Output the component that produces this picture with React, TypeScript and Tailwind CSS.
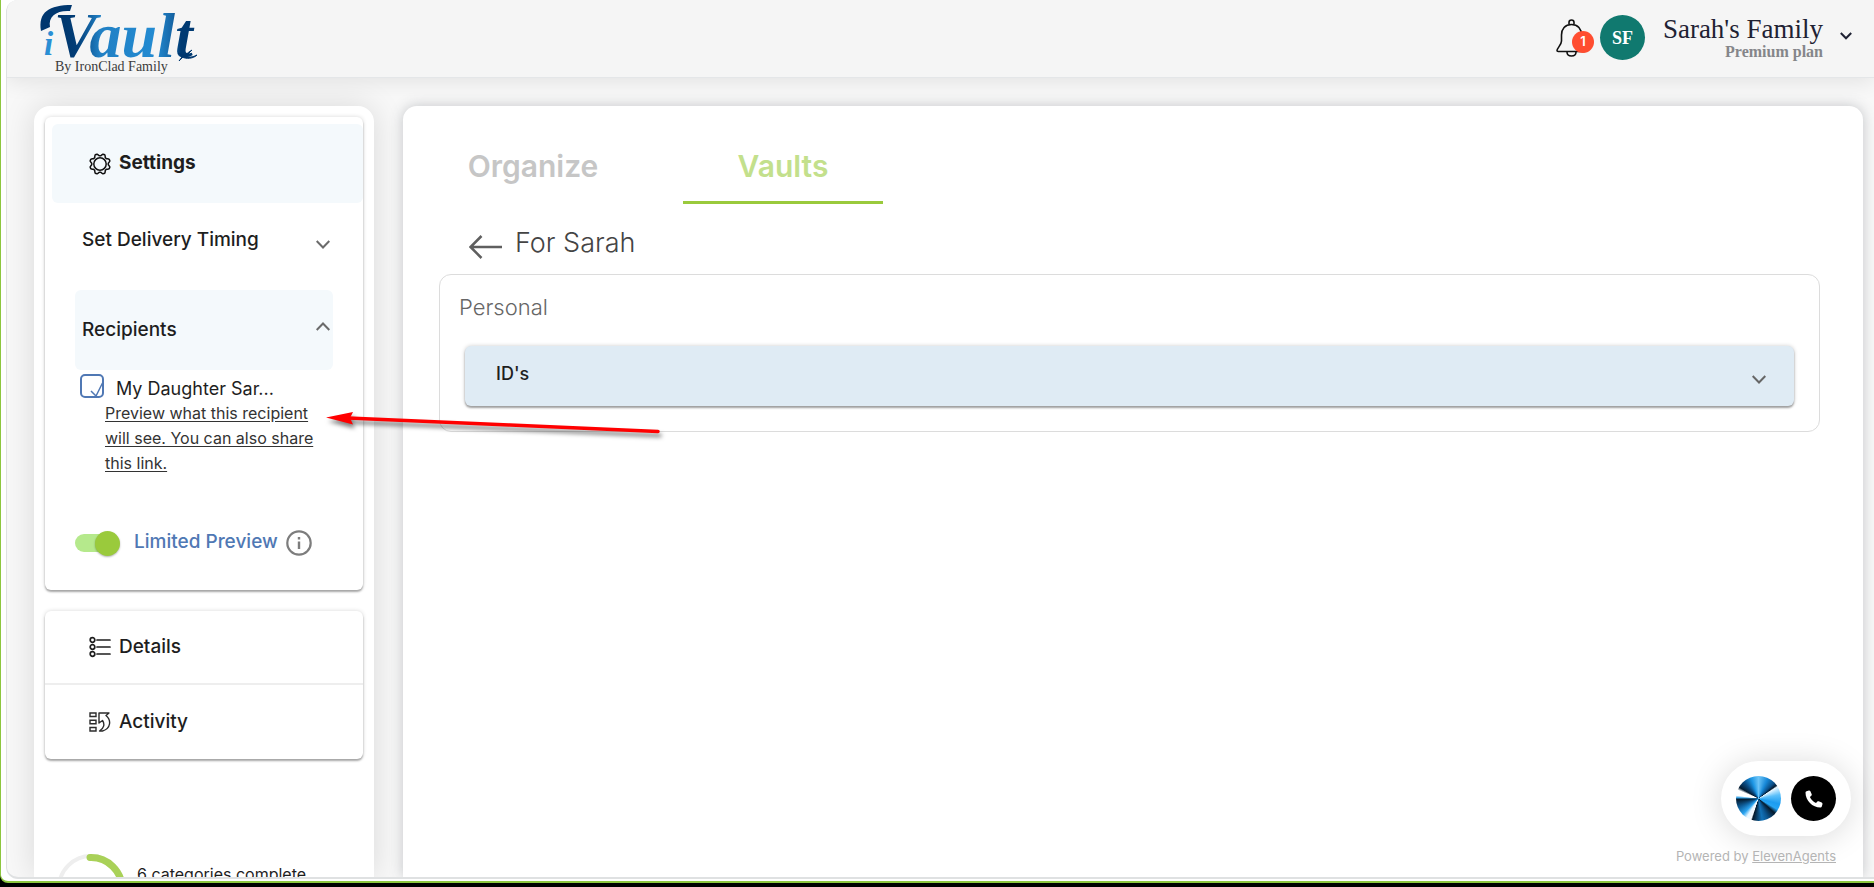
import React, { useState } from "react";

const ink = "#1e1e1e";

function Chevron({ up = false, className = "text-[#6b6b6b]" }: { up?: boolean; className?: string }) {
  return (
    <svg viewBox="0 0 14 9" className={`h-[9px] w-[14px] shrink-0 ${className}`} fill="none" stroke="currentColor" strokeWidth="2" aria-hidden="true">
      <path d={up ? "M.7 8 7 1.5 13.3 8" : "M.7 1 7 7.5 13.3 1"} />
    </svg>
  );
}

function Logo() {
  return (
    <svg viewBox="0 0 170 78" className="h-[78px] w-[170px]" role="img" aria-label="iVault By IronClad Family">
      <defs>
        <linearGradient id="vault" gradientUnits="userSpaceOnUse" x1="20" y1="0" x2="160" y2="0">
          <stop offset="0" stopColor="#003468" />
          <stop offset="0.16" stopColor="#023e78" />
          <stop offset="0.32" stopColor="#2180c4" />
          <stop offset="0.72" stopColor="#238bd2" />
          <stop offset="0.84" stopColor="#1665a5" />
          <stop offset="0.9" stopColor="#003a72" />
        </linearGradient>
      </defs>
      <path d="M6 31C3 12 14 5 37 5L35 11C22 10 13 16 15 27Z" fill="#00376f" />
      <text x="19" y="57" fontSize="64" fontWeight="700" fontStyle="italic" fill="url(#vault)" className="font-['Liberation_Serif',serif]">Vault</text>
      <path d="M143 53C150 58 157 58 162 55C158 59 151 59 147 57L144 61C148 57 152 53 157 50L151 56Z" fill="#00376f" stroke="#00376f" />
      <text x="9" y="55" fontSize="33" fontWeight="700" fontStyle="italic" fill="#2a8fd4" className="font-['Liberation_Serif',serif]">i</text>
      <text x="20" y="71" fontSize="14" fill="#3c3c3c" className="font-['Liberation_Serif',serif]">By IronClad Family</text>
    </svg>
  );
}

function Bell() {
  return (
    <svg viewBox="0 0 32 38" className="h-[38px] w-8" fill="none" stroke="#111" strokeWidth="1.6" aria-hidden="true">
      <path d="M13 5V3.500a2.500 2.500 0 0 1 5 0V5" />
      <path d="M15.500 5.500C9 5.500 5.500 10 5.500 16v6c0 4-4.500 7-4.500 9.500 0 .8.5 1 1.200 1h26.600c.7 0 1.200-.2 1.200-1 0-2.500-4.500-5.500-4.500-9.500v-6c0-6-3.500-10.500-10-10.500Z" />
      <path d="M11 33c0 5.300 9 5.300 9 0" />
    </svg>
  );
}

function GearIcon() {
  const points = Array.from({ length: 64 }, (_, i) => {
    const a = (i / 64) * Math.PI * 2;
    const r = 9.300 + 1.100 * Math.tanh(2 * Math.cos(8 * a + Math.PI));
    return `${(11 + r * Math.cos(a)).toFixed(2)},${(11 + r * Math.sin(a)).toFixed(2)}`;
  }).join(" ");
  return (
    <svg viewBox="0 0 22 22" className="size-[22px]" fill="none" stroke="#111" strokeWidth="1.5" strokeLinejoin="round" aria-hidden="true">
      <polygon points={points} />
      <circle cx="11" cy="11" r="6.200" />
    </svg>
  );
}

function ListIcon() {
  return (
    <svg viewBox="0 0 22 22" className="size-[22px]" fill="none" stroke={ink} strokeWidth="1.7" aria-hidden="true">
      {[4, 11, 18].map((y) => (
        <g key={y}>
          <circle cx="3.500" cy={y} r="2.300" />
          <path d={`M8 ${y}h13`} strokeLinecap="round" />
        </g>
      ))}
    </svg>
  );
}

function ActivityIcon() {
  return (
    <svg viewBox="0 0 22 22" className="size-[22px]" fill="none" stroke="#2c2c2c" strokeWidth="1.400" aria-hidden="true">
      <path d="M1 2h6v3.500H1zM1 9.200h6v3.500H1zM1 16.500h6V20H1z" />
      <path d="M10 2h10l-3 2.500c5.500 4.500 5 13-3.500 15.500h-3c4.500-2.500 5.500-7 3-10.500L10 12Z" strokeLinejoin="round" />
    </svg>
  );
}

function Header() {
  return (
    <header className="relative flex h-[78px] shrink-0 items-start justify-between border-b border-[#e4e6e8] bg-[#f5f5f5] pl-7 pr-[22px] shadow-[0_4px_20px_rgba(0,0,0,0.09)]">
      <a href="#home"><Logo /></a>
      <div className="flex items-start pt-[15px]">
        <button aria-label="Notifications, 1 unread" className="relative mt-1 h-[38px] w-11">
          <Bell />
          <span className="absolute left-4 top-3 flex size-[22px] items-center justify-center rounded-full bg-[#ff4d30] text-[13px] font-semibold text-white">1</span>
        </button>
        <span className="flex size-[45px] items-center justify-center rounded-full bg-[#10796f] font-['Liberation_Serif',serif] text-lg font-bold text-white">SF</span>
        <button className="ml-[18px] flex items-center gap-[17px] font-['Liberation_Serif',serif]">
          <span className="flex flex-col items-end">
            <span className="text-[27px] leading-7 text-[#1f2233]">Sarah's Family</span>
            <span className="text-base font-bold leading-[18px] text-[#85868a]">Premium plan</span>
          </span>
          <svg viewBox="0 0 12 8" className="mb-1 h-2 w-3" fill="none" stroke="#1f2233" strokeWidth="2" aria-hidden="true"><path d="M.8 1 6 6.300 11.200 1" /></svg>
        </button>
      </div>
    </header>
  );
}

const panel = "bg-white shadow-[0_2px_2px_rgba(0,0,0,0.3),0_0_4px_rgba(0,0,0,0.16)]";

function Sidebar() {
  const [checked, setChecked] = useState(true);
  const [limited, setLimited] = useState(true);
  return (
    <aside className="w-[340px] shrink-0 rounded-t-2xl bg-white px-[11px] pt-[11px] text-[#1e1e1e] shadow-[0_0_32px_rgba(0,0,0,0.13)]">
      <section className={`${panel} rounded-md pb-[34px] pt-[7px]`}>
        <button className="ml-[7px] flex h-[79px] w-[311px] items-center gap-2 rounded-md bg-[#f4f9fc] pl-[37px] text-[19px] font-bold">
          <GearIcon />
          Settings
        </button>
        <div className="px-[30px]">
          <button className="flex h-[87px] w-full items-start justify-between pl-[7px] pr-[3px] pt-[25px] text-[19px] font-medium leading-6">
            Set Delivery Timing
            <Chevron className="mt-3 text-[#6b6b6b]" />
          </button>
          <button className="flex h-20 w-full items-center justify-between rounded-md bg-[#f4f9fc] pl-[7px] pr-[3px] text-[19px] font-medium">
            Recipients
            <Chevron up className="mb-2 text-[#6b6b6b]" />
          </button>
          <label className="flex h-[31px] items-start gap-3 pl-[5px] pt-1 text-lg leading-[30px]">
            <span className="relative size-6 shrink-0">
              <input type="checkbox" checked={checked} onChange={() => setChecked(!checked)} className="block size-6 appearance-none rounded-[5px] border-2 border-[#5078b4]" />
              {checked && (
                <svg viewBox="0 0 24 24" className="pointer-events-none absolute inset-0 size-6" fill="none" stroke="#5078b4" strokeWidth="1.500" aria-hidden="true"><path d="m11 17 5 5L22.500 9" /></svg>
              )}
            </span>
            My Daughter Sar...
          </label>
          <a href="#preview" className="ml-[30px] block w-[212px] text-base leading-[25px] text-[#333] underline underline-offset-2">
            Preview what this recipient will see. You can also share this link.
          </a>
          <div className="mt-[54px] flex h-[26px] items-center">
            <label className="flex items-center gap-[14px] text-[19px] font-medium text-[#5078b4]">
              <span className="relative flex h-[26px] w-[45px] items-center">
                <input type="checkbox" role="switch" checked={limited} onChange={() => setLimited(!limited)} className="h-[18px] w-10 appearance-none rounded-full bg-[#b5e98c]" />
                <span className={`absolute size-[25px] rounded-full bg-[#9aca3c] shadow-[0_1px_2px_rgba(0,0,0,0.3)] ${limited ? "right-0" : "left-0"}`} />
              </span>
              <span className="pb-0.5">Limited Preview</span>
            </label>
            <button aria-label="About limited preview" className="ml-2">
              <svg viewBox="0 0 26 26" className="size-[26px]" fill="none" stroke="#7d7d7d" aria-hidden="true">
                <circle cx="13" cy="13" r="11.700" strokeWidth="2.200" />
                <path d="M13 11.500V19M13 7v2.400" strokeWidth="2.400" />
              </svg>
            </button>
          </div>
        </div>
      </section>
      <nav className={`${panel} mt-[21px] rounded-md text-[19px] font-medium`}>
        <button className="flex h-[74px] w-full items-center gap-2 border-b-2 border-[#eee] pl-11"><ListIcon />Details</button>
        <button className="flex h-[74px] w-full items-center gap-2 pl-11"><ActivityIcon />Activity</button>
      </nav>
      <div className="mt-[93px] flex items-start gap-2.5 pl-3">
        <svg viewBox="0 0 70 70" className="size-[70px]" fill="none" aria-hidden="true">
          <circle cx="34" cy="36" r="32" stroke="#eee" strokeWidth="4" />
          <path d="M33 5.500A31 31 0 0 1 65 37" stroke="#a9d158" strokeWidth="7" strokeLinecap="round" />
        </svg>
        <p className="pt-2 text-base leading-7">6 categories complete</p>
      </div>
    </aside>
  );
}

function Main() {
  return (
    <main className="min-w-0 flex-1 rounded-t-[14px] bg-white px-9 pt-[26px] shadow-[0_0_14px_rgba(60,70,80,0.28)]">
      <div role="tablist" className="-ml-1.5 flex gap-[50px] text-3xl font-semibold">
        <button role="tab" aria-selected="false" className="h-[72px] w-[200px] border-b-3 border-transparent pb-0.5 text-[#c6c6c6]">Organize</button>
        <button role="tab" aria-selected="true" className="h-[72px] w-[200px] border-b-3 border-[#9aca3c] pb-0.5 text-[#c3e08c]">Vaults</button>
      </div>
      <div className="flex h-[70px] items-center gap-3 pl-[30px] pt-2">
        <button aria-label="Back" className="pt-2">
          <svg viewBox="0 0 34 24" className="h-6 w-[34px]" fill="none" stroke="#5f5f5f" strokeWidth="2.500" aria-hidden="true"><path d="M33 12H2M12.500 1 1.500 12l11 11" /></svg>
        </button>
        <h1 className="text-[27px] font-light leading-8 text-[#444]">For Sarah</h1>
      </div>
      <section className="mr-[7px] rounded-xl border border-[#dcdcdc] px-[25px] pb-[25px] pt-4">
        <h2 className="-ml-1.5 text-[22px] font-light leading-8 text-[#666]">Personal</h2>
        <button className="mt-[23px] flex h-[60px] w-full items-center justify-between rounded-md bg-[#dfebf4] pl-[31px] pr-7 text-lg font-medium text-[#1e1e1e] shadow-[0_2px_2px_rgba(0,0,0,0.32),0_0_4px_rgba(0,0,0,0.2)]">
          <span className="pb-1">ID's</span>
          <Chevron className="mt-1.5 text-[#666]" />
        </button>
      </section>
    </main>
  );
}

function CallWidget() {
  return (
    <div className="absolute bottom-[17px] right-[23px] flex flex-col items-end gap-3">
      <div className="flex h-[75px] items-center gap-2.5 rounded-full bg-white px-[15px] shadow-[0_2px_32px_rgba(0,0,0,0.15)]">
        <span className="size-[45px] rounded-full bg-[conic-gradient(#6cc4f7_0deg,#1788d8_25deg,#0a4d86_45deg,#031a30_54deg,#e8f6ff_58deg,#5cc0fa_80deg,#1c9cf0_105deg,#25a5f5_120deg,#04192b_132deg,#0b5590_155deg,#1272b8_170deg,#04182a_196deg,#f5fbff_200deg,#e8f6ff_212deg,#2ba4f0_225deg,#0f62a0_245deg,#03182b_268deg,#2a9fe8_272deg,#fff_278deg,#fff_292deg,#031a30_300deg,#0a4d86_320deg,#1c96e4_340deg,#6cc4f7_360deg)]" />
        <button aria-label="Start call" className="flex size-[45px] items-center justify-center rounded-full bg-black">
          <svg viewBox="0 0 18 18" className="size-[18px]" fill="#fff" aria-hidden="true"><path d="M3.900.5c.6-.1 1.200.2 1.500.8l1.300 3c.2.6.1 1.100-.4 1.500L4.900 7c1.300 2.700 3.400 4.800 6.100 6.100l1.200-1.400c.4-.5.9-.6 1.500-.4l3 1.300c.6.3.9.9.8 1.500l-.7 2.400c-.2.600-.7 1-1.300 1C7.400 17.500.500 10.600.500 2.500c0-.600.400-1.100 1-1.300Z" /></svg>
        </button>
      </div>
      <p className="mr-[15px] text-[13px] leading-4 text-[#b4b4b4]">Powered by <a href="#elevenagents" className="underline">ElevenAgents</a></p>
    </div>
  );
}

function PointerArrow() {
  return (
    <svg viewBox="0 0 350 40" className="pointer-events-none absolute left-[319px] top-[402px] h-10 w-[350px] drop-shadow-[2px_4px_2px_rgba(0,0,0,0.5)]" aria-hidden="true">
      <path d="M28 16 338 29.500" stroke="#f00" strokeWidth="3.500" strokeLinecap="round" />
      <path d="M6 15.500 33 10l-3 6 3 6.500Z" fill="#f00" />
    </svg>
  );
}

export default function App() {
  return (
    <div className="h-screen bg-black pb-1 font-['Inter',sans-serif]">
      <div className="relative h-full overflow-hidden rounded-bl-lg border-b-2 border-l border-[#8dc63f] bg-white pb-0.5 pl-[5px]">
        <div className="flex h-full flex-col overflow-hidden rounded-l-xl border-b-2 border-l border-[#dfe1e2] bg-[#f8f8f8]">
          <Header />
          <div className="flex min-h-0 flex-1 gap-[29px] overflow-hidden pl-[27px] pr-[11px] pt-7">
            <Sidebar />
            <Main />
          </div>
        </div>
        <CallWidget />
        <PointerArrow />
      </div>
    </div>
  );
}
